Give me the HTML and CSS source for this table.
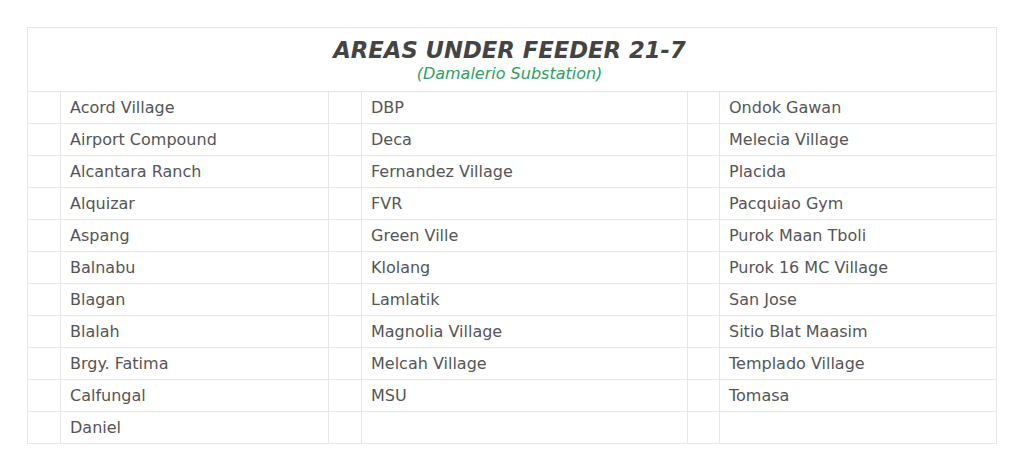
FILE: index.html
```html
<!DOCTYPE html>
<html>
<head>
<meta charset="utf-8">
<link rel="stylesheet" href="styles.css">
</head>
<body>
<div class="page">
<table class="areas">
  <colgroup>
    <col class="c-g1"><col class="c-a"><col class="c-g1"><col class="c-b"><col class="c-g2"><col class="c-c">
  </colgroup>
  <thead>
    <tr><th colspan="6" class="head">
      <div class="title">AREAS UNDER FEEDER 21-7</div>
      <div class="sub">(Damalerio Substation)</div>
    </th></tr>
  </thead>
  <tbody>
    <tr><td></td><td>Acord Village</td><td></td><td>DBP</td><td></td><td>Ondok Gawan</td></tr>
    <tr><td></td><td>Airport Compound</td><td></td><td>Deca</td><td></td><td>Melecia Village</td></tr>
    <tr><td></td><td>Alcantara Ranch</td><td></td><td>Fernandez Village</td><td></td><td>Placida</td></tr>
    <tr><td></td><td>Alquizar</td><td></td><td>FVR</td><td></td><td>Pacquiao Gym</td></tr>
    <tr><td></td><td>Aspang</td><td></td><td>Green Ville</td><td></td><td>Purok Maan Tboli</td></tr>
    <tr><td></td><td>Balnabu</td><td></td><td>Klolang</td><td></td><td>Purok 16 MC Village</td></tr>
    <tr><td></td><td>Blagan</td><td></td><td>Lamlatik</td><td></td><td>San Jose</td></tr>
    <tr><td></td><td>Blalah</td><td></td><td>Magnolia Village</td><td></td><td>Sitio Blat Maasim</td></tr>
    <tr><td></td><td>Brgy. Fatima</td><td></td><td>Melcah Village</td><td></td><td>Templado Village</td></tr>
    <tr><td></td><td>Calfungal</td><td></td><td>MSU</td><td></td><td>Tomasa</td></tr>
    <tr><td></td><td>Daniel</td><td></td><td></td><td></td><td></td></tr>
  </tbody>
</table>
</div>
</body>
</html>
```

FILE: styles.css
```css
html, body {
  margin: 0;
  padding: 0;
  background: #ffffff;
}
.page {
  padding: 27px 27px 0 27px;
}
.areas {
  width: 969px;
  border-collapse: collapse;
  table-layout: fixed;
  font-family: Verdana, "DejaVu Sans", sans-serif;
  color: #555555;
}
.c-g1 { width: 33px; }
.c-g2 { width: 32px; }
.c-a { width: 268px; }
.c-b { width: 326px; }
.c-c { width: 277px; }
.areas th, .areas td {
  border: 1px solid #e6e6e6;
}
.head {
  height: 63px;
  padding: 0 5px 0 0;
  text-align: center;
  vertical-align: top;
}
.title {
  margin-top: 9px;
  font-size: 22.7px;
  font-weight: bold;
  font-style: italic;
  color: #444444;
  line-height: 26px;
}
.sub {
  margin-top: 1px;
  font-size: 16px;
  font-style: italic;
  font-weight: normal;
  color: #2e9e62;
  line-height: 20px;
}
.areas td {
  height: 31px;
  padding: 0 9px;
  font-size: 16px;
  line-height: 20px;
  white-space: nowrap;
}
```
